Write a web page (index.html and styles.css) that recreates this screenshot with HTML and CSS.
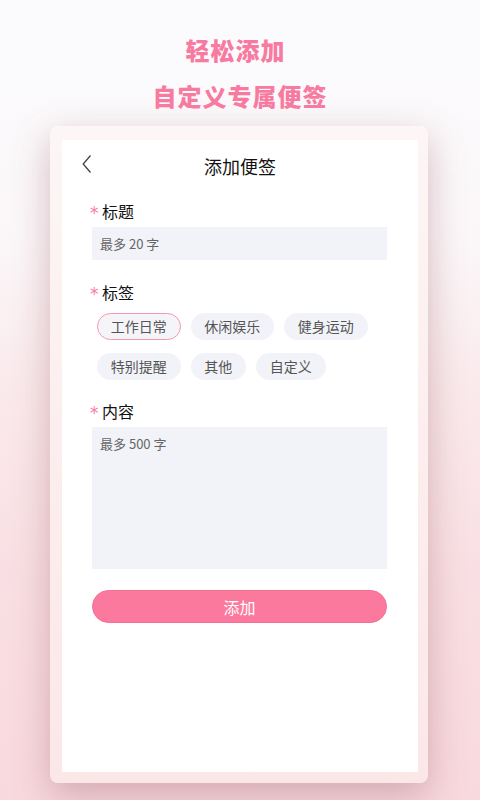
FILE: index.html
```html
<!DOCTYPE html>
<html lang="zh-CN">
<head>
<meta charset="utf-8">
<title>添加便签</title>
<link rel="stylesheet" href="styles.css">
</head>
<body>
<div class="page">
  <div class="hero">
    <div class="hero-line hero-first">轻松添加</div>
    <div class="hero-line">自定义专属便签</div>
  </div>
  <div class="frame">
    <div class="screen">
      <div class="header">
        <span class="back">
          <svg width="12" height="20" viewBox="0 0 12 20"><path d="M9.5 1.5 L2.2 10 L9.5 18.5" fill="none" stroke="#444" stroke-width="1.3"/></svg>
        </span>
        <span class="header-title">添加便签</span>
      </div>
      <div class="form">
        <div class="label"><span class="star">*</span>标题</div>
        <div class="field field-single">最多 20 字</div>

        <div class="label label-gap"><span class="star">*</span>标签</div>
        <div class="chips">
          <span class="chip chip-active">工作日常</span>
          <span class="chip">休闲娱乐</span>
          <span class="chip">健身运动</span>
          <span class="chip">特别提醒</span>
          <span class="chip">其他</span>
          <span class="chip">自定义</span>
        </div>

        <div class="label label-gap2"><span class="star">*</span>内容</div>
        <div class="field field-multi">最多 500 字</div>

        <div class="btn">添加</div>
      </div>
    </div>
  </div>
</div>
</body>
</html>
```
FILE: styles.css
```css
* { box-sizing: border-box; }
html, body { margin: 0; padding: 0; }
body {
  width: 480px;
  height: 800px;
  overflow: hidden;
  font-family: "Noto Sans CJK SC", "Noto Sans", sans-serif;
  background: linear-gradient(180deg, #fbfbfd 0%, #fbf7f9 30%, #faeaec 48%, #f9dfe3 72%, #f8d9de 100%);
}
.page { width: 480px; height: 800px; }
.hero {
  padding-top: 27px;
  text-align: center;
}
.hero-line {
  font-size: 24px;
  line-height: 46px;
  font-weight: 900;
  color: #f77ba1;
  letter-spacing: 1px;
}
.hero-first { padding-right: 9px; }
.frame {
  margin: 7px 0 0 50px;
  width: 378px;
  height: 657px;
  padding: 14px 10px 11px 12px;
  border-radius: 8px;
  background: linear-gradient(180deg, #fdf6f6 0%, #fcefef 40%, #fce7e8 100%);
  box-shadow: 0 12px 36px rgba(160, 100, 110, 0.42);
}
.screen {
  width: 356px;
  height: 632px;
  background: #fff;
}
.header {
  position: relative;
  height: 52px;
  display: flex;
  align-items: center;
  justify-content: center;
}
.back {
  position: absolute;
  left: 19px;
  top: 14px;
  display: flex;
}
.header-title {
  font-size: 18px;
  color: #111;
}
.form {
  padding: 0 31px 0 30px;
}
.label {
  margin-top: 8px;
  margin-left: -2px;
  height: 22px;
  display: flex;
  align-items: center;
  font-size: 16px;
  color: #111;
}
.label-gap { margin-top: 21px; }
.label-gap2 { margin-top: 20px; }
.star {
  color: #f77ba1;
  font-size: 17px;
  font-family: "DejaVu Sans", sans-serif;
  width: 12px;
  line-height: 22px;
  margin-top: 4px;
}
.field {
  margin-top: 5px;
  background: #f2f3f8;
  font-size: 13px;
  color: #666;
  padding-left: 8px;
}
.field-single {
  height: 33px;
  line-height: 33px;
}
.field-multi {
  height: 142px;
  padding-top: 7px;
  line-height: 20px;
}
.chips {
  margin-top: 10px;
  padding-left: 5px;
  display: flex;
  flex-wrap: wrap;
  column-gap: 10px;
  row-gap: 13px;
}
.chip {
  height: 27px;
  line-height: 27px;
  padding: 0 13.75px;
  border-radius: 14px;
  background: #f2f3f8;
  font-size: 14px;
  color: #555;
}
.chip-active {
  line-height: 25px;
  padding: 0 12.75px;
  border: 1px solid #f597b3;
  background: #f5f5f9;
}
.btn {
  margin-top: 21px;
  height: 33px;
  border-radius: 17px;
  background: #fb799d;
  border: 1px solid #f46f94;
  color: #fff;
  font-size: 16px;
  display: flex;
  align-items: center;
  justify-content: center;
}
```
